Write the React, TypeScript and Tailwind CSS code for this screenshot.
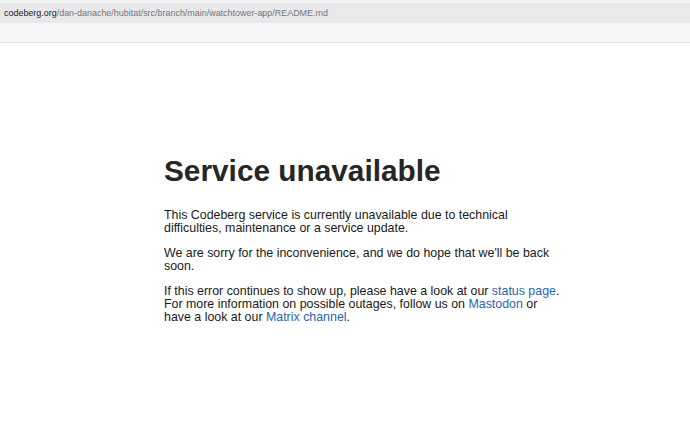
import React from 'react';

const linkClass = 'text-[#1f66b3] no-underline';

function AddressBar() {
  return (
    <div className="w-full">
      <div className="h-[3px] bg-[#f3f3f5]" />
      <div className="h-[20px] bg-[#e9e9eb] flex items-center px-[4px]">
        <span className="text-[8.95px] leading-none whitespace-nowrap">
          <span className="text-[#1b1b1d] font-medium">codeberg.org</span>
          <span className="text-[#75757a]">/dan-danache/hubitat/src/branch/main/watchtower-app/README.md</span>
        </span>
      </div>
      <div className="h-[20px] bg-[#f6f6f8] border-b border-[#e2e2e4]" />
    </div>
  );
}

export default function App() {
  return (
    <div className="w-[690px] h-[422px] bg-white overflow-hidden font-['Liberation_Sans',Arial,sans-serif]">
      <AddressBar />
      <main className="pl-[164px] pt-[110px] text-[#1a1a1a]">
        <h1 className="text-[29.8px] leading-[36px] font-bold text-[#262626] mb-[20px]">
          Service unavailable
        </h1>
        <div className="w-[400px] text-[12.4px] leading-[13px] flex flex-col gap-[12px]">
          <p>
            This Codeberg service is currently unavailable due to technical difficulties, maintenance or a service update.
          </p>
          <p>
            We are sorry for the inconvenience, and we do hope that we'll be back soon.
          </p>
          <p>
            If this error continues to show up, please have a look at our <a className={linkClass}>status page</a>.
            For more information on possible outages, follow us on <a className={linkClass}>Mastodon</a> or have a
            look at our <a className={linkClass}>Matrix channel</a>.
          </p>
        </div>
      </main>
    </div>
  );
}
